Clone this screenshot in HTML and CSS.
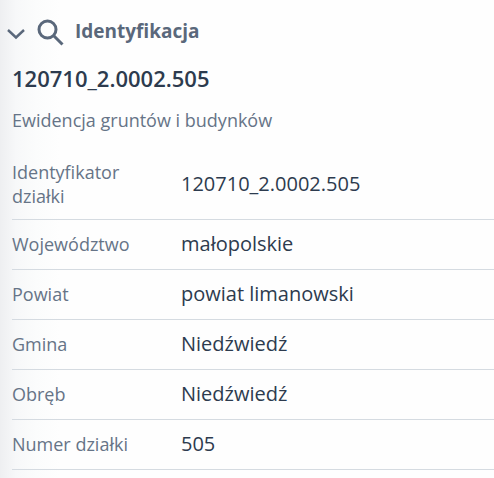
FILE: index.html
```html
<!DOCTYPE html>
<html lang="pl">
<head>
  <meta charset="UTF-8" />
  <meta name="viewport" content="width=device-width, initial-scale=1.0"/>
  <title>Identyfikacja</title>
  <link rel="stylesheet" href="styles.css">
</head>
<body>
  <section class="panel">
    <button type="button" class="panel-header" aria-expanded="true">
      <svg class="chevron" width="20" height="12" viewBox="0 0 20 12" aria-hidden="true">
        <path d="M2 2 L10 9.5 L18 2" />
      </svg>
      <svg class="search" width="28" height="28" viewBox="0 0 28 28" aria-hidden="true">
        <circle cx="10.5" cy="10.5" r="8.5" />
        <path d="M16.5 16.5 L25.5 25.5" />
      </svg>
      <span>Identyfikacja</span>
    </button>

    <div class="panel-body">
      <h1>120710_2.0002.505</h1>
      <p class="source">Ewidencja gruntów i budynków</p>

      <table class="details">
        <tr>
          <th scope="row">Identyfikator działki</th>
          <td>120710_2.0002.505</td>
        </tr>
        <tr>
          <th scope="row">Województwo</th>
          <td>małopolskie</td>
        </tr>
        <tr>
          <th scope="row">Powiat</th>
          <td>powiat limanowski</td>
        </tr>
        <tr>
          <th scope="row">Gmina</th>
          <td>Niedźwiedź</td>
        </tr>
        <tr>
          <th scope="row">Obręb</th>
          <td>Niedźwiedź</td>
        </tr>
        <tr>
          <th scope="row">Numer działki</th>
          <td>505</td>
        </tr>
      </table>
    </div>
  </section>
</body>
</html>
```

FILE: styles.css
```css
body {
  font-family: 'Segoe UI', 'Open Sans', 'Noto Sans', sans-serif;
  background-color: #fefefe;
  color: #2d3b4e;
  margin: 0;
}

.panel {
  box-sizing: border-box;
  min-height: 100vh;
  background-image: linear-gradient(to right, #eeeff1 0, #f7f8f9 16px, #fbfcfc 36px, #fefefe 60px);
}

.panel-header {
  display: flex;
  align-items: center;
  width: 100%;
  height: 62px;
  padding: 0 6px;
  border: none;
  background: none;
  color: #5a687b;
  font-family: inherit;
  font-size: 19px;
  font-weight: 700;
  line-height: 24px;
  text-align: left;
  cursor: pointer;
}

.panel-header svg {
  flex: none;
  fill: none;
  stroke: currentColor;
}

.chevron {
  margin-top: 6px;
  margin-right: 11px;
  stroke-width: 2.4;
}

.search {
  margin-top: 3px;
  margin-right: 10px;
  stroke-width: 3;
}

.panel-body {
  padding-left: 12px;
}

h1 {
  margin: 0;
  font-size: 22px;
  font-weight: 600;
  line-height: 32px;
}

.source {
  margin: 12px 0 15px;
  color: #667487;
  font-size: 18px;
  line-height: 28px;
}

.details {
  width: 100%;
  border-collapse: collapse;
  table-layout: fixed;
}

.details th,
.details td {
  box-sizing: border-box;
  height: 50px;
  padding: 0;
  border-bottom: 1px solid #d5dbe1;
  text-align: left;
  vertical-align: middle;
  line-height: 24px;
}

.details th {
  width: 169px;
  padding-right: 24px;
  color: #667487;
  font-size: 18px;
  font-weight: 400;
}

.details td {
  font-size: 20px;
}

.details tr:first-child th {
  height: 70px;
}
```
